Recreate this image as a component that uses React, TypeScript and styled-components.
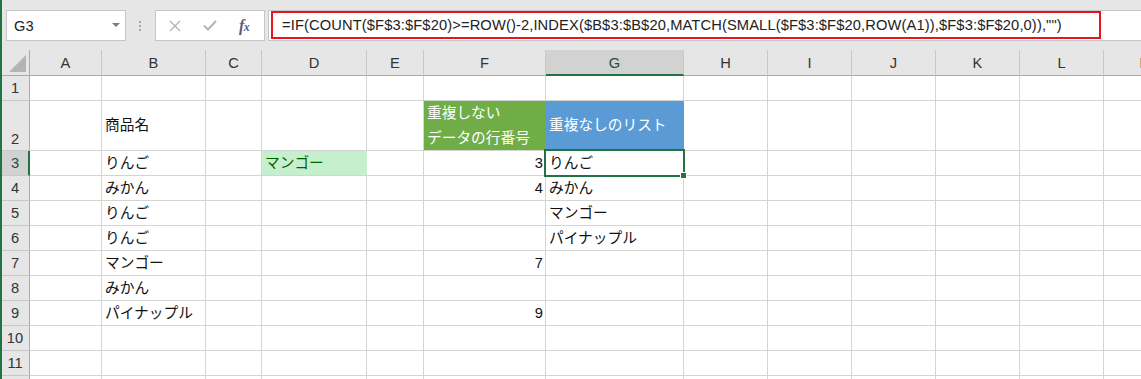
import React from "react";
import styled, { createGlobalStyle, css } from "styled-components";

const GlobalStyle = createGlobalStyle`
  html, body { margin: 0; padding: 0; background: #ffffff; overflow: hidden; }
  * { box-sizing: border-box; }
`;

const UI_FONT = `"Liberation Sans", "Noto Sans CJK JP", sans-serif`;
const GREEN = "#217346";

const Frame = styled.div`
  width: 1141px;
  height: 379px;
  overflow: hidden;
  border-left: 2px solid ${GREEN};
  display: flex;
  flex-direction: column;
  font-family: ${UI_FONT};
  background: #ffffff;
`;

const Toolbar = styled.div`
  height: 50px;
  flex: none;
  background: #e6e6e6;
  display: flex;
  align-items: flex-start;
  padding-top: 10px;
`;

const NameBox = styled.div`
  margin-left: 4px;
  width: 120px;
  height: 31px;
  background: #ffffff;
  border: 1px solid #c6c6c6;
  display: flex;
  align-items: center;
  justify-content: space-between;
  padding: 0 5px 0 7px;
  font-size: 14.7px;
  color: #222;
`;

const DropArrow = styled.span`
  width: 0;
  height: 0;
  border-left: 4px solid transparent;
  border-right: 4px solid transparent;
  border-top: 4px solid #7b7b8c;
  margin-bottom: 2px;
`;

const Grip = styled.div`
  width: 2px;
  height: 31px;
  margin: 0 14px 0 13px;
  display: flex;
  flex-direction: column;
  justify-content: center;
  gap: 2px;
  & > span {
    width: 2px;
    height: 2px;
    background: #a6a6a6;
  }
`;

const ButtonGroup = styled.div`
  width: 110px;
  height: 31px;
  background: #ffffff;
  border: 1px solid #c6c6c6;
  display: flex;
  align-items: center;
  padding-left: 13px;
`;

const IconSlot = styled.span<{ $w: number }>`
  width: ${(p) => p.$w}px;
  display: flex;
  align-items: center;
  justify-content: flex-start;
`;

const Fx = styled.span`
  font-family: "Liberation Serif", serif;
  font-style: italic;
  font-weight: bold;
  font-size: 16px;
  color: #5b5b78;
  letter-spacing: -0.5px;
  & > small {
    font-size: 12px;
  }
`;

const FormulaBox = styled.div`
  margin-left: 3px;
  flex: 1;
  height: 31px;
  background: #ffffff;
  border: 1px solid #c6c6c6;
  border-right: none;
  padding: 0 0 1px 2px;
  display: flex;
  align-items: stretch;
`;

const RedFrame = styled.div`
  width: 830px;
  height: 28px;
  border: 2px solid #e8161c;
  display: flex;
  align-items: center;
  padding-left: 9px;
  font-size: 14.7px;
  letter-spacing: 0.12px;
  color: #222;
  white-space: nowrap;
  overflow: hidden;
`;

const Sheet = styled.div`
  display: grid;
  grid-template-columns: 28px 72px 104px 56px 105px 57px 122px 138px 84px 84px 84px 84px 84px 84px;
  grid-template-rows: 26px 25px 50px repeat(10, 25px);
  font-size: 14.7px;
`;

const Corner = styled.div`
  background: #e6e6e6;
  border-right: 1px solid #ababab;
  border-bottom: 1px solid #ababab;
  position: relative;
  &::after {
    content: "";
    position: absolute;
    right: 3px;
    bottom: 3px;
    width: 0;
    height: 0;
    border-left: 17px solid transparent;
    border-bottom: 17px solid #b4b4b4;
  }
`;

const ColHeader = styled.div<{ $sel?: boolean }>`
  background: ${(p) => (p.$sel ? "#d2d2d2" : "#e6e6e6")};
  border-right: 1px solid #c8c8c8;
  border-bottom: ${(p) => (p.$sel ? `2px solid ${GREEN}` : "1px solid #ababab")};
  display: flex;
  align-items: center;
  justify-content: center;
  color: ${(p) => (p.$sel ? "#1f4e3a" : "#333")};
  padding-top: ${(p) => (p.$sel ? "1px" : "0")};
`;

const RowHeader = styled.div<{ $sel?: boolean; $tall?: boolean }>`
  background: ${(p) => (p.$sel ? "#d2d2d2" : "#e6e6e6")};
  border-right: ${(p) => (p.$sel ? `2px solid ${GREEN}` : "1px solid #ababab")};
  border-bottom: 1px solid #c8c8c8;
  display: flex;
  align-items: ${(p) => (p.$tall ? "flex-end" : "center")};
  justify-content: center;
  padding-bottom: ${(p) => (p.$tall ? "3px" : "0")};
  padding-right: ${(p) => (p.$sel ? "0" : "1px")};
  color: ${(p) => (p.$sel ? "#1f4e3a" : "#333")};
`;

const Cell = styled.div<{ $bg?: string; $color?: string; $right?: boolean; $sel?: boolean }>`
  position: relative;
  border-right: 1px solid ${(p) => p.$bg || "#d4d4d4"};
  border-bottom: 1px solid #d4d4d4;
  background: ${(p) => p.$bg || "#ffffff"};
  color: ${(p) => p.$color || "#111"};
  display: flex;
  align-items: center;
  justify-content: ${(p) => (p.$right ? "flex-end" : "flex-start")};
  padding: 0 ${(p) => (p.$right ? "2px" : "3px")} 0 3px;
  white-space: pre-line;
  line-height: 25px;
  ${(p) =>
    p.$sel &&
    css`
      z-index: 2;
    `}
`;

const Selection = styled.div`
  position: absolute;
  left: -2px;
  top: -2px;
  right: -2px;
  bottom: -2px;
  border: 2px solid ${GREEN};
  pointer-events: none;
`;

const FillHandle = styled.div`
  position: absolute;
  right: -4px;
  bottom: -4px;
  width: 7px;
  height: 7px;
  background: ${GREEN};
  border: 1px solid #ffffff;
`;

const COLS = ["A", "B", "C", "D", "E", "F", "G", "H", "I", "J", "K", "L", "M"];

type CellData = { text?: string; bg?: string; color?: string; right?: boolean };

const DATA: Record<number, Record<string, CellData>> = {
  2: {
    B: { text: "商品名" },
    F: { text: "重複しない\nデータの行番号", bg: "#70ad47", color: "#ffffff" },
    G: { text: "重複なしのリスト", bg: "#5b9bd5", color: "#ffffff" },
  },
  3: {
    B: { text: "りんご" },
    D: { text: "マンゴー", bg: "#c6efce", color: "#006100" },
    F: { text: "3", right: true },
    G: { text: "りんご" },
  },
  4: { B: { text: "みかん" }, F: { text: "4", right: true }, G: { text: "みかん" } },
  5: { B: { text: "りんご" }, G: { text: "マンゴー" } },
  6: { B: { text: "りんご" }, G: { text: "パイナップル" } },
  7: { B: { text: "マンゴー" }, F: { text: "7", right: true } },
  8: { B: { text: "みかん" } },
  9: { B: { text: "パイナップル" }, F: { text: "9", right: true } },
};

const FORMULA =
  '=IF(COUNT($F$3:$F$20)>=ROW()-2,INDEX($B$3:$B$20,MATCH(SMALL($F$3:$F$20,ROW(A1)),$F$3:$F$20,0)),"")';

export default function App() {
  const rows = Array.from({ length: 11 }, (_, i) => i + 1);
  return (
    <>
      <GlobalStyle />
      <Frame>
        <Toolbar>
          <NameBox>
            <span>G3</span>
            <DropArrow />
          </NameBox>
          <Grip>
            <span />
            <span />
            <span />
          </Grip>
          <ButtonGroup>
            <IconSlot $w={34}>
              <svg width="12" height="12" viewBox="0 0 12 12">
                <path d="M1 1 L11 11 M11 1 L1 11" stroke="#b4b4b4" strokeWidth="1.4" fill="none" />
              </svg>
            </IconSlot>
            <IconSlot $w={36}>
              <svg width="14" height="11" viewBox="0 0 14 11">
                <path d="M1 5.5 L5 9.5 L13 1" stroke="#b4b4b4" strokeWidth="2" fill="none" />
              </svg>
            </IconSlot>
            <IconSlot $w={20}>
              <Fx>
                f<small>x</small>
              </Fx>
            </IconSlot>
          </ButtonGroup>
          <FormulaBox>
            <RedFrame>{FORMULA}</RedFrame>
          </FormulaBox>
        </Toolbar>
        <Sheet>
          <Corner />
          {COLS.map((c) => (
            <ColHeader key={c} $sel={c === "G"}>
              {c}
            </ColHeader>
          ))}
          {rows.map((r) => (
            <React.Fragment key={r}>
              <RowHeader $sel={r === 3} $tall={r === 2}>
                {r}
              </RowHeader>
              {COLS.map((c) => {
                const d = DATA[r]?.[c];
                const sel = r === 3 && c === "G";
                return (
                  <Cell key={c} $bg={d?.bg} $color={d?.color} $right={d?.right} $sel={sel}>
                    {d?.text}
                    {sel && (
                      <Selection>
                        <FillHandle />
                      </Selection>
                    )}
                  </Cell>
                );
              })}
            </React.Fragment>
          ))}
          <RowHeader />
          {COLS.map((c) => (
            <Cell key={`12${c}`} />
          ))}
        </Sheet>
      </Frame>
    </>
  );
}
